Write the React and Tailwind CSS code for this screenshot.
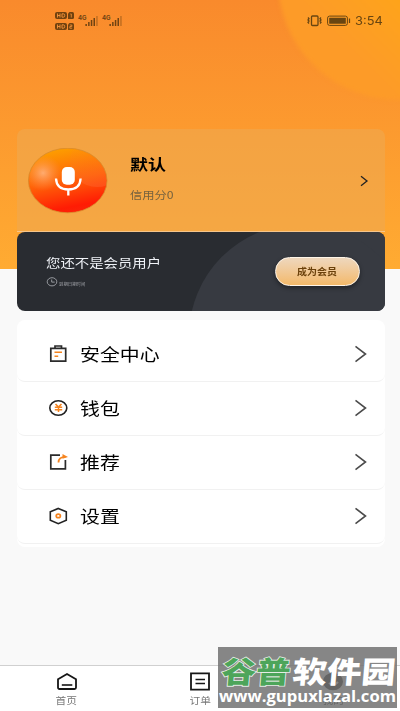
import React from 'react'

const SIGNAL_BARS = [2, 4, 6, 8, 10]

function SimBadge({ slot }) {
  return (
    <svg width="20" height="7" viewBox="0 0 20 7">
      <rect x="0" y="0" width="12" height="7" rx="2" fill="#71420f" />
      <path d="M2.5 1.5v4M5 1.5v4M2.5 3.5h2.5M7 1.8v3.4h1.3q1.4 0 1.4-1.7t-1.4-1.7z" fill="none" stroke="#f8953a" strokeWidth="0.9" />
      <path d="M13 1.5 14.5 0h3q1.5 0 1.5 1.5v4q0 1.5-1.5 1.5H13z" fill="#71420f" />
      <path
        d={slot === 1 ? 'M15.3 2h1v3.5' : 'M14.8 2h2v1.5h-2v1.7h2.3'}
        fill="none"
        stroke="#f8953a"
        strokeWidth="0.8"
      />
    </svg>
  )
}

function Signal() {
  return (
    <div className="flex w-6 items-start">
      <span className="mt-[-1px] w-[7px] font-['Inter',sans-serif] text-[6px] font-bold leading-[7px] tracking-tight text-[#6f4312]">4G</span>
      <svg width="14" height="11" viewBox="0 0 14 11" className="shrink-0">
        {SIGNAL_BARS.map((h, i) => (
          <rect key={h} x={i * 2.7 + 0.4} y={11 - h} width="1.5" height={h} fill="#6f4312" opacity={i === 4 ? 0.4 : 1} />
        ))}
      </svg>
    </div>
  )
}

function StatusBar() {
  return (
    <div className="flex h-[41px] items-center justify-between pr-[18px] pl-[55px]">
      <div className="flex items-center">
        <div className="flex w-[23px] flex-col gap-1">
          <SimBadge slot={1} />
          <SimBadge slot={2} />
        </div>
        <Signal />
        <Signal />
      </div>
      <div className="flex items-center text-[#684511]">
        <svg width="16" height="12" viewBox="0 0 16 12" fill="none" stroke="currentColor">
          <rect x="4.5" y="1" width="6.5" height="9.5" rx="1" strokeWidth="1.3" />
          <path d="m1 2.5 1 1.2-1 1.2 1 1.2-1 1.2 1 1.2M14 2.5l-1 1.2 1 1.2-1 1.2 1 1.2-1 1.2" strokeWidth="1.3" />
        </svg>
        <svg width="24" height="12" viewBox="0 0 24 12" className="ml-1">
          <rect x="0.6" y="1.1" width="19.8" height="9.3" rx="2" fill="none" stroke="currentColor" strokeWidth="1" />
          <rect x="2.2" y="2.8" width="16.6" height="6" rx="0.5" fill="currentColor" />
          <path d="M22.5 3.5v4.5" stroke="currentColor" strokeWidth="1.2" />
        </svg>
        <span className="ml-1 w-[27px] font-['Inter',sans-serif] text-xs leading-3">
          <span className="inline-block origin-left scale-x-[1.07]">3:54</span>
        </span>
      </div>
    </div>
  )
}

function Avatar() {
  return (
    <svg width="80" height="66" viewBox="0 0 80 66" className="mt-px ml-px shrink-0">
      <defs>
        <linearGradient id="ball" x1="0.35" y1="0" x2="0.6" y2="1">
          <stop offset="0" stopColor="#fda000" />
          <stop offset="0.5" stopColor="#ff6208" />
          <stop offset="0.9" stopColor="#ff1c04" />
          <stop offset="1" stopColor="#fb2308" />
        </linearGradient>
        <radialGradient id="shine">
          <stop offset="0" stopColor="#ffb482" stopOpacity="0.85" />
          <stop offset="1" stopColor="#ff9050" stopOpacity="0" />
        </radialGradient>
        <linearGradient id="sheen" x1="0" y1="0" x2="0" y2="1">
          <stop offset="0" stopColor="#ff8a20" stopOpacity="0" />
          <stop offset="1" stopColor="#ff7040" stopOpacity="0.32" />
        </linearGradient>
        <clipPath id="ballClip">
          <ellipse cx="39.7" cy="32.5" rx="38.7" ry="31.8" />
        </clipPath>
      </defs>
      <ellipse cx="39.7" cy="32.5" rx="39.3" ry="32.3" fill="url(#ball)" stroke="#d98a2c" strokeWidth="0.8" />
      <g clipPath="url(#ballClip)">
        <ellipse cx="15" cy="25" rx="19" ry="18" fill="url(#shine)" />
        <ellipse cx="69" cy="13" rx="27" ry="26" fill="url(#sheen)" />
      </g>
      <rect x="33.8" y="19" width="13" height="17.8" rx="5" fill="#fff" />
      <path d="M28 30.500q.5 11 12.300 11t12.300-11M40.300 41.500v6" fill="none" stroke="#fff" strokeWidth="2.3" />
    </svg>
  )
}

function ProfileCard() {
  return (
    <section className="flex h-[103px] items-center rounded-t-lg border-b border-[#f6c58a] bg-[#efa850]/60 pr-4 pl-2.5">
      <Avatar />
      <div className="mb-0.5 ml-[22px] flex-1">
        <div className="h-[23px] text-[15px] leading-[17px] font-bold text-black">
          <span className="inline-block origin-left scale-x-[1.2]">默认</span>
        </div>
        <div className="mt-[9px] h-4 text-[10.5px] leading-4 text-[#75623f]">
          <span className="inline-block origin-left scale-x-[1.17]">信用分0</span>
        </div>
      </div>
      <svg width="9" height="12" viewBox="0 0 9 12" fill="none" stroke="#222" strokeWidth="1.3" className="mt-px">
        <path d="m1 1.300 6 4.700-6 4.800" />
      </svg>
    </section>
  )
}

function MemberCard() {
  return (
    <section className="relative flex h-[79px] items-center overflow-hidden rounded-lg bg-[#292c31] pr-[25px] pl-[29px]">
      <div className="absolute top-[-8px] left-[172px] size-[224px] rounded-full bg-[#373a41] shadow-[60px_0_0_#373a41]" />
      <div className="relative mb-0.5 flex-1">
        <div className="h-[18px] text-[12.3px] leading-[18px] text-[#f0f3f8]">
          <span className="inline-block origin-left scale-x-[1.17]">您还不是会员用户</span>
        </div>
        <div className="mt-1 flex h-3 items-center text-[#a3a5aa]">
          <svg width="12" height="10" viewBox="0 0 12 10" fill="none" stroke="currentColor" strokeWidth="0.9">
            <ellipse cx="6" cy="4.8" rx="4.8" ry="4.1" />
            <path d="M5.700 2.500v2.600h3" />
          </svg>
          <span className="mt-1.5 ml-px text-[4px] leading-[5px]">
            <span className="inline-block origin-left scale-x-[1.1]">到期日期时间</span>
          </span>
        </div>
      </div>
      <button className="relative flex h-[29px] w-[85px] items-center justify-center rounded-full border border-[#fff5e8] bg-linear-to-b from-[#eed7bd] to-[#f3b969] text-[9px] font-bold text-[#6b410b] shadow-[0_2px_4px_rgba(0,0,0,0.4)]">
        <span className="scale-x-[1.11]">成为会员</span>
      </button>
    </section>
  )
}

function SafetyIcon() {
  return (
    <svg width="20" height="18" viewBox="0 0 20 18" fill="none" stroke="#2b2b2b" strokeWidth="1.7">
      <path d="M1.800 3.300h14.900v12.900H1.800zM6 3V1h6.500v2" />
      <path d="M5.500 7.300h7.500M5.500 11.300h3.700" stroke="#f5841f" strokeWidth="1.5" />
    </svg>
  )
}

function WalletIcon() {
  return (
    <svg width="20" height="18" viewBox="0 0 20 18" fill="none">
      <ellipse cx="9.3" cy="9" rx="8.5" ry="7.3" stroke="#222" strokeWidth="1.6" />
      <path d="m6.500 4.900 3 3.200 3-3.200M5.800 8.300h7.400M5.800 10.800h7.400M9.500 8v5" stroke="#f5841f" strokeWidth="1.5" />
    </svg>
  )
}

function ShareIcon() {
  return (
    <svg width="20" height="18" viewBox="0 0 20 18" fill="none">
      <path d="M11 2.200H1.800v13.700h14.600V7" stroke="#2b2b2b" strokeWidth="1.7" />
      <path d="M9.500 9.500c0-4 2.800-5.700 7-5.700" stroke="#f5841f" strokeWidth="1.8" />
      <path d="m13.500 1 5.500 2.900-5.500 1.900z" fill="#f5841f" />
    </svg>
  )
}

function SettingsIcon() {
  return (
    <svg width="20" height="18" viewBox="0 0 20 18" fill="none">
      <path d="m9.300 1.400 8 3.400v8.400l-8 3.500-8-3.500V4.800z" stroke="#222" strokeWidth="1.6" />
      <ellipse cx="9.3" cy="8.9" rx="2.1" ry="1.7" stroke="#f5841f" strokeWidth="1.7" />
    </svg>
  )
}

const MENU = [
  { label: '安全中心', Icon: SafetyIcon },
  { label: '钱包', Icon: WalletIcon },
  { label: '推荐', Icon: ShareIcon },
  { label: '设置', Icon: SettingsIcon },
]

function MenuList() {
  return (
    <section className="mt-[9px] h-[227px] rounded-lg bg-white pt-2">
      {MENU.map(({ label, Icon }) => (
        <div key={label} className="flex h-[54px] items-center rounded-b-lg border-b border-[#f1f1f1] pr-[18px] pb-0.5 pl-8">
          <Icon />
          <span className="ml-[11px] flex-1 text-[17px] leading-6 text-black">
            <span className="inline-block origin-left scale-x-[1.17]">{label}</span>
          </span>
          <svg width="12" height="18" viewBox="0 0 12 18" fill="none" stroke="#4b4b4b" strokeWidth="1.6">
            <path d="m.5 1.300 10 7.700-10 7.700" />
          </svg>
        </div>
      ))}
    </section>
  )
}

function TabBar() {
  return (
    <nav className="grid h-[46px] grid-cols-3 border-t border-[#d0d0d0] bg-white text-[9.3px] leading-3 text-[#777]">
      <div className="flex flex-col items-center pt-1.5">
        <svg width="22" height="19" viewBox="0 0 22 19" fill="none" stroke="#161616" strokeWidth="1.8">
          <path d="M2 7.200 11 2l9 5.200v8.300q0 1.500-1.500 1.500h-15Q2 17 2 15.500z" />
          <path d="M5.800 13h10.500" strokeWidth="1.6" />
        </svg>
        <span className="mt-[3px] scale-x-[1.15]">首页</span>
      </div>
      <div className="flex flex-col items-center pt-1.5">
        <svg width="22" height="19" viewBox="0 0 22 19" fill="none" stroke="#161616" strokeWidth="1.8">
          <path d="M2 1.300h18v16.300H2z" />
          <path d="M6.500 7.500h9.500M6.500 11.500h9.500" strokeWidth="1.5" />
        </svg>
        <span className="mt-[3px] scale-x-[1.15]">订单</span>
      </div>
      <div className="flex flex-col items-center pt-1.5 text-[#161616]">
        <svg width="22" height="19" viewBox="0 0 22 19" fill="none">
          <ellipse cx="11" cy="9.5" rx="10" ry="8.8" fill="#161616" />
          <path d="M7 11q4.500 4 9-1" stroke="#fff" strokeWidth="2" />
        </svg>
        <span className="mt-[3px] scale-x-[1.15]">我的</span>
      </div>
    </nav>
  )
}

function Watermark() {
  return (
    <div className="absolute top-[647px] left-[218px] h-[61px] w-[179px] bg-[#727272]/85">
      <svg width="179" height="61" viewBox="0 0 179 61">
        <g fontFamily="'Noto Sans CJK SC', sans-serif" fontWeight="900" fontSize="30" transform="skewX(-5)">
          <text x="6" y="36" textLength="69" lengthAdjust="spacingAndGlyphs" fill="#4da55a" stroke="#e5ece5" strokeWidth="1.6" paintOrder="stroke">谷普</text>
          <text x="77" y="36" textLength="103" lengthAdjust="spacingAndGlyphs" fill="#fff">软件园</text>
        </g>
        <text x="1" y="55" textLength="177" lengthAdjust="spacingAndGlyphs" fontFamily="'Open Sans', sans-serif" fontWeight="700" fontSize="16.5" fill="#fff">www.gupuxlazal.com</text>
      </svg>
    </div>
  )
}

export default function App() {
  return (
    <div className="relative flex h-[711px] w-[400px] flex-col overflow-hidden bg-[#f9f9f9] font-['Noto_Sans_CJK_SC',sans-serif]">
      <div className="absolute inset-x-0 top-0 h-[269px] overflow-hidden bg-linear-to-b from-[#f98a2c] to-[#ffab32]">
        <div className="absolute top-[-140px] left-[278px] size-[240px] rounded-full bg-linear-to-tr from-[#fd9b28] from-25% to-[#ffab00] to-65% blur-[2px]" />
      </div>
      <div className="relative flex flex-1 flex-col">
        <StatusBar />
        <main className="mt-[88px] mr-[15px] ml-[17px] flex-1">
          <ProfileCard />
          <MemberCard />
          <MenuList />
        </main>
        <TabBar />
      </div>
      <Watermark />
    </div>
  )
}
